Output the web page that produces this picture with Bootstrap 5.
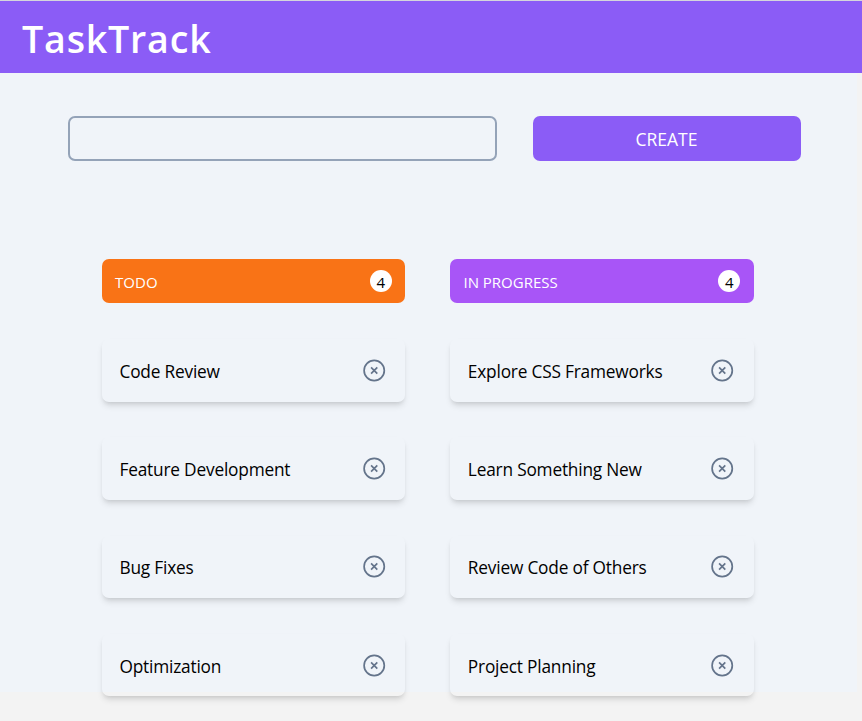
<!DOCTYPE html>
<html lang="en">
<head>
<meta charset="utf-8">
<meta name="viewport" content="width=device-width, initial-scale=1">
<title>TaskTrack</title>
<link href="https://cdn.jsdelivr.net/npm/bootstrap@5.3.0/dist/css/bootstrap.min.css" rel="stylesheet">
<style>
  body { background: #f3f3f3; color: #000; font-family: "Open Sans", "Noto Sans", sans-serif; height: 721px; overflow: hidden; }
  .page { width: 857px; height: 618.5px; background: #f0f4f9; }
  .topbar { height: 73px; background: #8b5cf6; border-top: 1px solid #d5d6dc; padding: 3px 0 0 22px; }
  .brand-name { font-size: 37.6px; font-weight: 600; letter-spacing: .8px; line-height: 1; color: #fff; }
  .create-form { padding: 43px 0 0 68px; gap: 35.5px; }
  .task-input { width: 429px; height: 44.6px; border: 2.2px solid #94a3b8; border-radius: 7px; background: transparent; }
  .create-btn { width: 268px; height: 44.6px; border: 0; border-radius: 7px; background: #8b5cf6; color: #fff; font-size: 17.5px; padding: 1.6px 0 0; }
  .board { padding: 98.2px 0 0 101.7px; gap: 44.7px; }
  .lane { width: 303.7px; }
  .lane-head { height: 44.6px; border-radius: 7px; color: #fff; font-size: 15px; padding: 0 13.4px; }
  .lane-title { padding-top: 2px; }
  .todo { background: #f97316; }
  .progress-lane { background: #a855f7; }
  .count { width: 22.3px; height: 22.3px; padding-top: 2px; background: #fff; color: #000; }
  .task { height: 62.5px; margin-top: 35.75px; border-radius: 7px; padding: 0 19.8px 0 17.8px; font-size: 17.3px; letter-spacing: -.2px; box-shadow: 0 4.5px 6.7px -1px rgba(0,0,0,.1), 0 2.2px 4.5px -2px rgba(0,0,0,.1); }
  .task span { display: inline-block; padding-top: 3px; }
  .del { width: 23px; height: 23px; }
</style>
<script src="https://cdn.jsdelivr.net/npm/bootstrap@5.3.0/dist/js/bootstrap.bundle.min.js"></script>
</head>
<body>
<svg class="d-none"><symbol id="x" viewBox="0 0 23 23"><g fill="none" stroke="#64748b" stroke-width="1.7"><circle cx="11.2" cy="11.5" r="10.1"/><path d="M8.1 8.4l6.2 6.2M14.3 8.4l-6.2 6.2"/></g></symbol></svg>
<header class="topbar d-flex align-items-center"><h1 class="brand-name m-0">TaskTrack</h1></header>
<main class="page">
  <form class="create-form d-flex">
    <input class="task-input" type="text" aria-label="Task">
    <button class="create-btn" type="button">CREATE</button>
  </form>
  <div class="board d-flex">
    <section class="lane">
      <div class="lane-head todo d-flex align-items-center justify-content-between"><span class="lane-title">TODO</span><span class="count rounded-circle d-flex align-items-center justify-content-center">4</span></div>
      <div class="task d-flex align-items-center justify-content-between"><span>Code Review</span><svg class="del"><use href="#x"/></svg></div>
      <div class="task d-flex align-items-center justify-content-between"><span>Feature Development</span><svg class="del"><use href="#x"/></svg></div>
      <div class="task d-flex align-items-center justify-content-between"><span>Bug Fixes</span><svg class="del"><use href="#x"/></svg></div>
      <div class="task d-flex align-items-center justify-content-between"><span>Optimization</span><svg class="del"><use href="#x"/></svg></div>
    </section>
    <section class="lane">
      <div class="lane-head progress-lane d-flex align-items-center justify-content-between"><span class="lane-title">IN PROGRESS</span><span class="count rounded-circle d-flex align-items-center justify-content-center">4</span></div>
      <div class="task d-flex align-items-center justify-content-between"><span>Explore CSS Frameworks</span><svg class="del"><use href="#x"/></svg></div>
      <div class="task d-flex align-items-center justify-content-between"><span>Learn Something New</span><svg class="del"><use href="#x"/></svg></div>
      <div class="task d-flex align-items-center justify-content-between"><span>Review Code of Others</span><svg class="del"><use href="#x"/></svg></div>
      <div class="task d-flex align-items-center justify-content-between"><span>Project Planning</span><svg class="del"><use href="#x"/></svg></div>
    </section>
  </div>
</main>
</body>
</html>
